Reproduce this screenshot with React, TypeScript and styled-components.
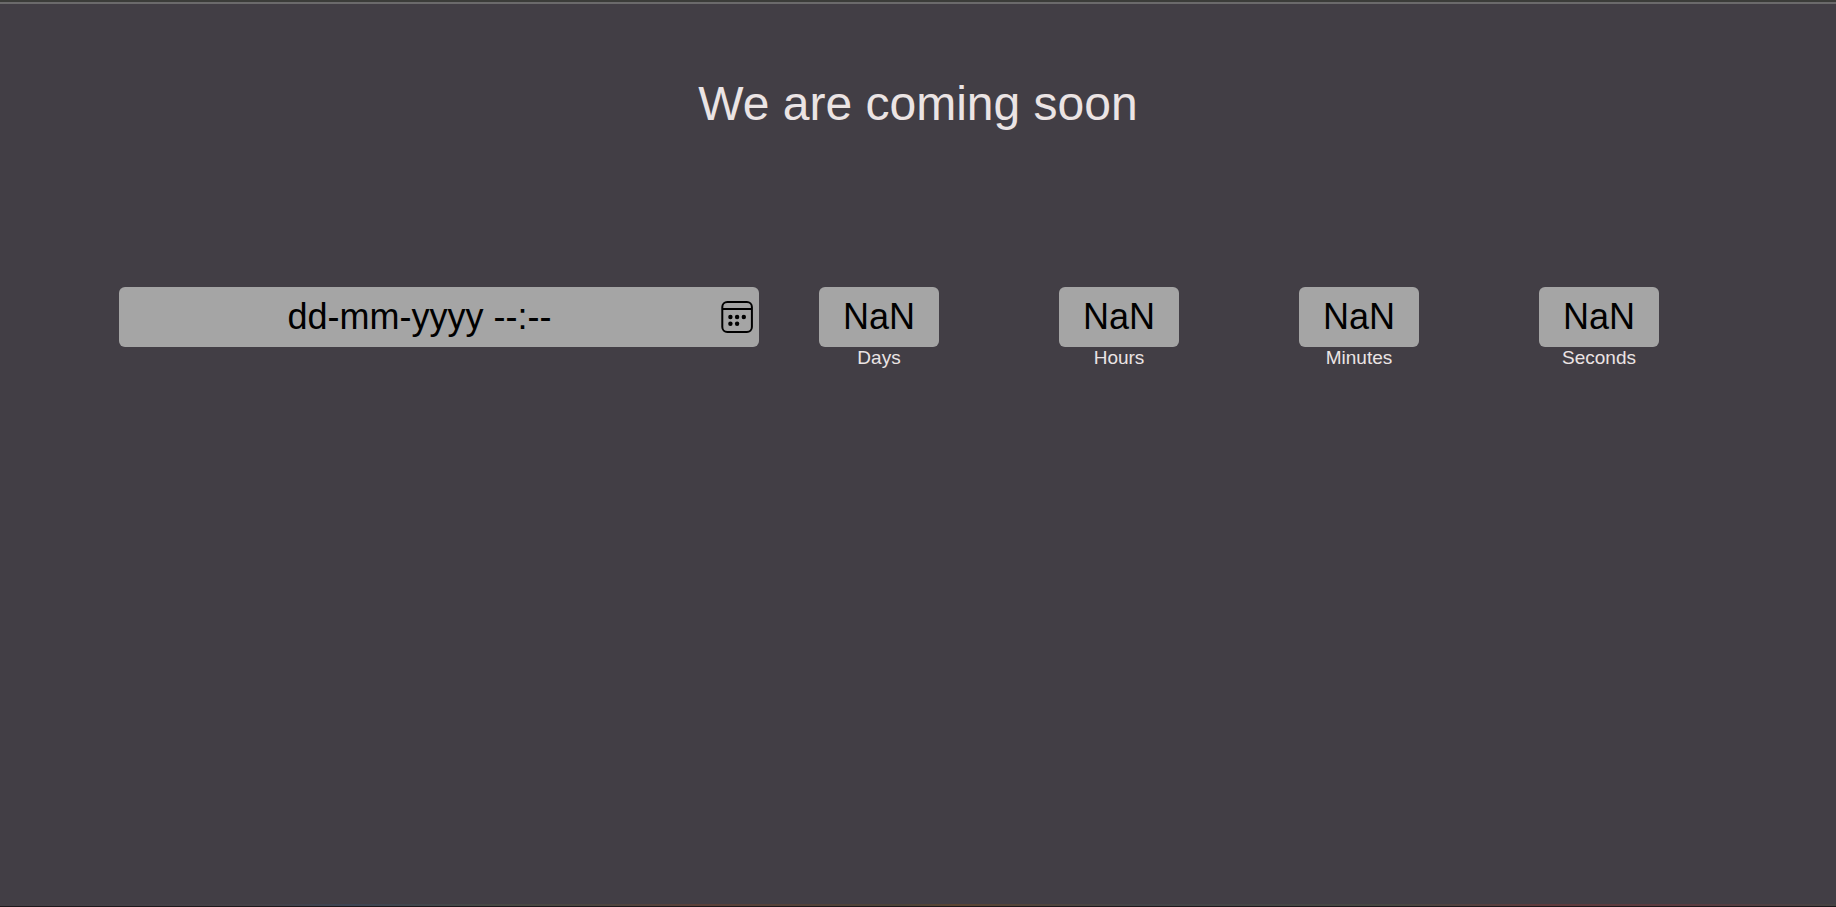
import React from "react";
import styled, { createGlobalStyle } from "styled-components";

const GlobalStyle = createGlobalStyle`
  * { box-sizing: border-box; }
  body {
    margin: 0;
    background: #423e45;
    font-family: Arial, "Liberation Sans", sans-serif;
  }
`;

const Page = styled.div`
  min-height: 100vh;
  display: flex;
  flex-direction: column;
  background: #423e45;
`;

const TopEdge = styled.div`
  height: 4px;
  background: #3b3c39;
  border-bottom: 2px solid #6b6a6b;
`;

const Main = styled.main`
  flex: 1;
`;

const Title = styled.h1`
  margin: 72px 0 0;
  color: #ebe4e4;
  font-size: 48px;
  font-weight: 400;
  line-height: 56px;
  text-align: center;
`;

const Countdown = styled.section`
  display: flex;
  justify-content: center;
  align-items: flex-start;
  margin-top: 155px;
  padding-right: 58px;
`;

const DateField = styled.div`
  display: flex;
  align-items: center;
  width: 640px;
  height: 60px;
  margin-right: 60px;
  padding-right: 5px;
  border-radius: 6px;
  background: #a5a5a5;
`;

const DateInput = styled.input`
  flex: 1;
  min-width: 0;
  height: 60px;
  padding: 0;
  border: 0;
  background: transparent;
  color: #000;
  font: 36px/42px Arial, "Liberation Sans", sans-serif;
  text-align: center;
  &::placeholder {
    color: #000;
    opacity: 1;
  }
`;

const CalendarButton = styled.button`
  display: flex;
  padding: 0;
  border: 0;
  background: transparent;
  color: #000;
  cursor: pointer;
`;

const Units = styled.div`
  display: flex;
  gap: 120px;
`;

const Unit = styled.div`
  display: flex;
  flex-direction: column;
  align-items: center;
  width: 120px;
`;

const Value = styled.output`
  width: 100%;
  border-radius: 6px;
  background: #a5a5a5;
  color: #000;
  font-size: 36px;
  line-height: 60px;
  text-align: center;
`;

const Label = styled.label`
  color: #ebe4e4;
  font-size: 19px;
  line-height: 22px;
`;

const BottomEdge = styled.footer`
  height: 3px;
  border-bottom: 1px solid #1d181c;
  background: linear-gradient(
    90deg,
    #433f45 0%,
    #454147 14%,
    #3d4554 19%,
    #474844 27%,
    #4a4540 32%,
    #5a4039 38%,
    #4b4339 49%,
    #5a4432 52%,
    #434448 62%,
    #474742 76%,
    #5f3a3c 84%,
    #5a3b40 92%,
    #454343 100%
  );
`;

const CalendarIcon = () => (
  <svg width="34" height="34" viewBox="0 0 34 34" fill="none" aria-hidden="true">
    <rect x="2.3" y="2" width="29.6" height="30" rx="5" stroke="currentColor" strokeWidth="2" />
    <path d="M2.3 9H31.9" stroke="currentColor" strokeWidth="2" />
    <g fill="currentColor">
      <circle cx="10.4" cy="17" r="2.2" />
      <circle cx="17.1" cy="17" r="2.2" />
      <circle cx="23.8" cy="17" r="2.2" />
      <circle cx="10.4" cy="23.7" r="2.2" />
      <circle cx="17.1" cy="23.7" r="2.2" />
    </g>
  </svg>
);

const units = ["Days", "Hours", "Minutes", "Seconds"];

export default function App() {
  return (
    <Page>
      <GlobalStyle />
      <TopEdge />
      <Main>
        <Title>We are coming soon</Title>
        <Countdown>
          <DateField>
            <DateInput type="text" aria-label="Launch date" placeholder="dd-mm-yyyy --:--" />
            <CalendarButton type="button" aria-label="Choose date">
              <CalendarIcon />
            </CalendarButton>
          </DateField>
          <Units>
            {units.map((unit) => (
              <Unit key={unit}>
                <Value id={unit}>NaN</Value>
                <Label htmlFor={unit}>{unit}</Label>
              </Unit>
            ))}
          </Units>
        </Countdown>
      </Main>
      <BottomEdge />
    </Page>
  );
}
